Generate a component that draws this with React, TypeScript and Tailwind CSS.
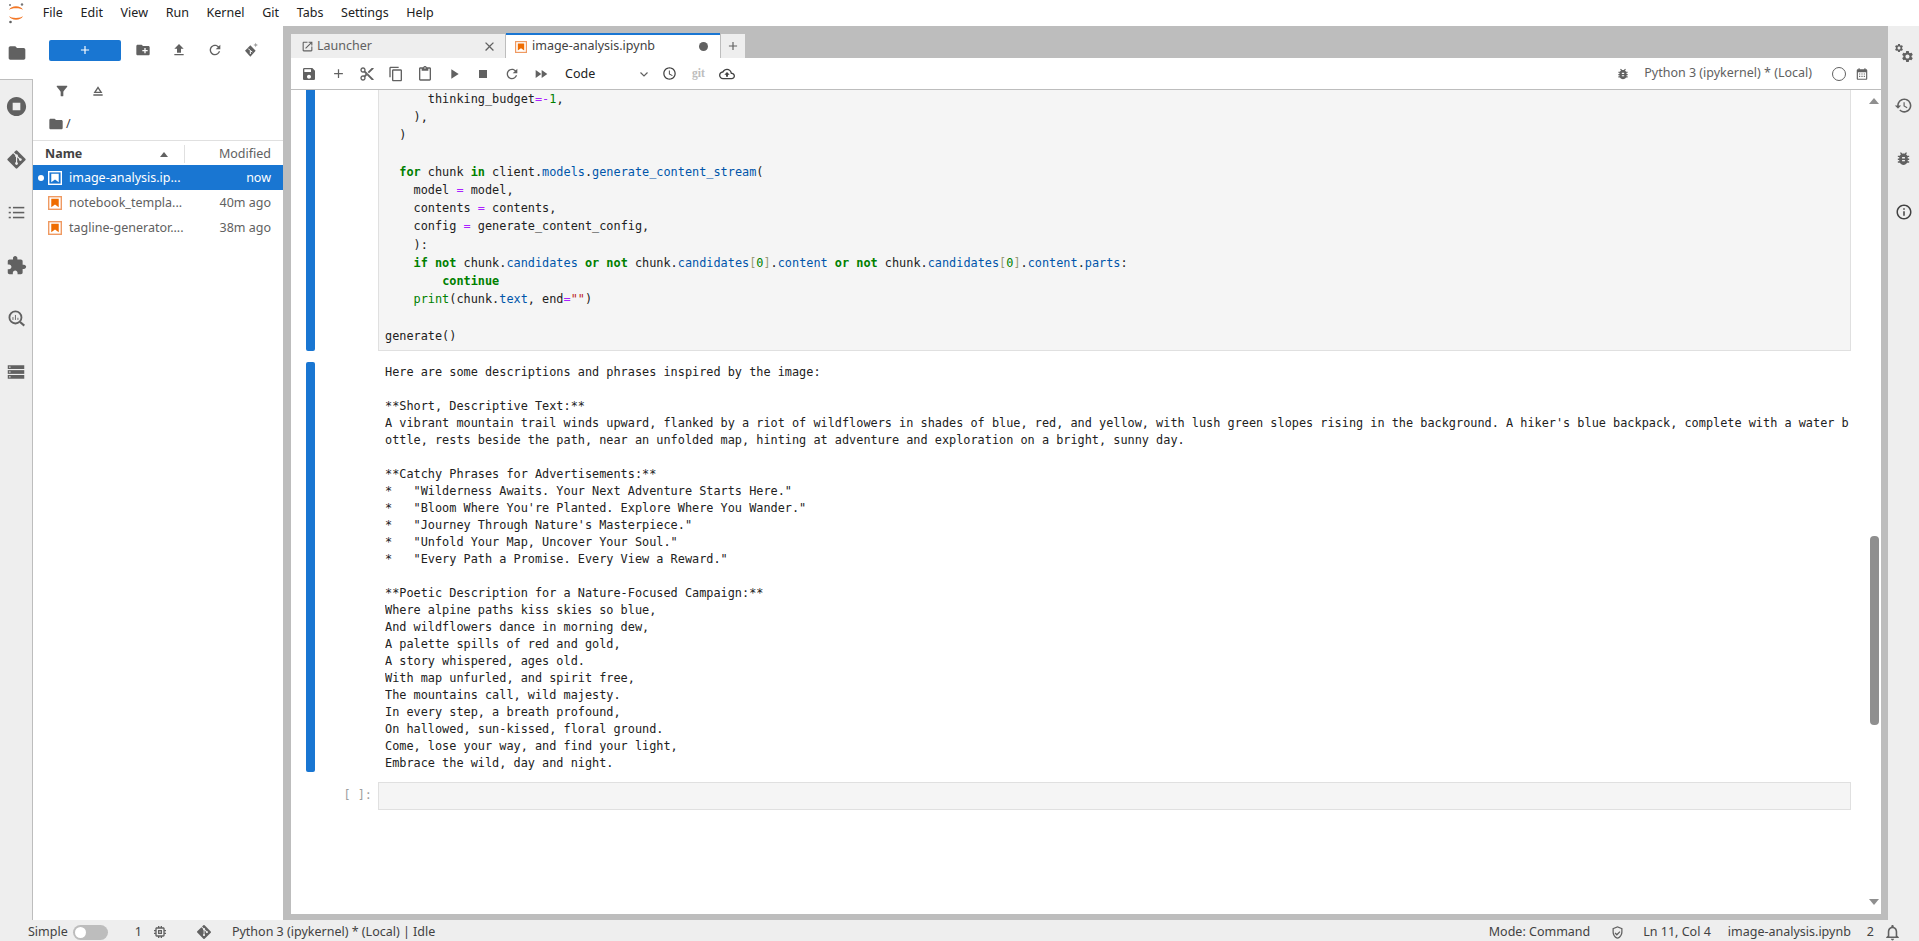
import { FaGitAlt } from "react-icons/fa";

const mono = { fontFamily: "'DejaVu Sans Mono', monospace" };

const paths: Record<string, string> = {
  folder: "M10 4H4c-1.1 0-1.99.9-1.99 2L2 18c0 1.1.9 2 2 2h16c1.1 0 2-.9 2-2V8c0-1.1-.9-2-2-2h-8l-2-2z",
  stopCircle: "M12 2C6.48 2 2 6.48 2 12s4.48 10 10 10 10-4.48 10-10S17.52 2 12 2zm4 14H8V8h8v8z",
  puzzle: "M20.5 11H19V7c0-1.1-.9-2-2-2h-4V3.5C13 2.12 11.88 1 10.5 1S8 2.12 8 3.5V5H4c-1.1 0-1.99.9-1.99 2v3.8H3.5c1.49 0 2.7 1.21 2.7 2.7s-1.21 2.7-2.7 2.7H2V20c0 1.1.9 2 2 2h3.8v-1.5c0-1.49 1.21-2.7 2.7-2.7 1.49 0 2.7 1.21 2.7 2.7V22H17c1.1 0 2-.9 2-2v-4h1.5c1.38 0 2.5-1.12 2.5-2.5S21.88 11 20.5 11z",
  save: "M17 3H5c-1.11 0-2 .9-2 2v14c0 1.1.89 2 2 2h14c1.1 0 2-.9 2-2V7l-4-4zm-5 16c-1.66 0-3-1.34-3-3s1.34-3 3-3 3 1.34 3 3-1.34 3-3 3zm3-10H5V5h10v4z",
  add: "M19 13h-6v6h-2v-6H5v-2h6V5h2v6h6v2z",
  cut: "M9.64 7.64c.23-.5.36-1.05.36-1.64 0-2.21-1.79-4-4-4S2 3.79 2 6s1.79 4 4 4c.59 0 1.14-.13 1.64-.36L10 12l-2.36 2.36C7.14 14.13 6.59 14 6 14c-2.21 0-4 1.79-4 4s1.79 4 4 4 4-1.79 4-4c0-.59-.13-1.14-.36-1.64L12 14l7 7h3v-1L9.64 7.64zM6 8c-1.1 0-2-.89-2-2s.9-2 2-2 2 .89 2 2-.9 2-2 2zm0 12c-1.1 0-2-.89-2-2s.9-2 2-2 2 .89 2 2-.9 2-2 2zm6-7.5c-.28 0-.5-.22-.5-.5s.22-.5.5-.5.5.22.5.5-.22.5-.5.5zM19 3l-6 6 2 2 7-7V3z",
  copy: "M16 1H4c-1.1 0-2 .9-2 2v14h2V3h12V1zm3 4H8c-1.1 0-2 .9-2 2v14c0 1.1.9 2 2 2h11c1.1 0 2-.9 2-2V7c0-1.1-.9-2-2-2zm0 16H8V7h11v14z",
  paste: "M19 2h-4.18C14.4.84 13.3 0 12 0c-1.3 0-2.4.84-2.82 2H5c-1.1 0-2 .9-2 2v16c0 1.1.9 2 2 2h14c1.1 0 2-.9 2-2V4c0-1.1-.9-2-2-2zm-7 0c.55 0 1 .45 1 1s-.45 1-1 1-1-.45-1-1 .45-1 1-1zm7 18H5V4h2v3h10V4h2v16z",
  play: "M8 5v14l11-7z",
  stop: "M6 6h12v12H6z",
  refresh: "M17.65 6.35C16.2 4.9 14.21 4 12 4c-4.42 0-7.99 3.58-7.99 8s3.57 8 7.99 8c3.73 0 6.84-2.55 7.73-6h-2.08c-.82 2.33-3.04 4-5.65 4-3.31 0-6-2.69-6-6s2.69-6 6-6c1.66 0 3.14.69 4.22 1.78L13 11h7V4l-2.35 2.35z",
  ff: "M4 18l8.5-6L4 6v12zm9-12v12l8.5-6L13 6z",
  clock: "M11.99 2C6.47 2 2 6.48 2 12s4.47 10 9.99 10C17.52 22 22 17.52 22 12S17.52 2 11.99 2zM12 20c-4.42 0-8-3.58-8-8s3.58-8 8-8 8 3.58 8 8-3.58 8-8 8zm.5-13H11v6l5.25 3.15.75-1.23-4.5-2.67V7z",
  cloud: "M19.35 10.04C18.67 6.59 15.64 4 12 4 9.11 4 6.6 5.64 5.35 8.04 2.34 8.36 0 10.91 0 14c0 3.31 2.69 6 6 6h13c2.76 0 5-2.24 5-5 0-2.64-2.05-4.78-4.65-4.96zM19 18H6c-2.21 0-4-1.79-4-4 0-2.05 1.53-3.76 3.56-3.97l1.07-.11.5-.95C8.08 7.14 9.94 6 12 6c2.62 0 4.88 1.86 5.39 4.43l.3 1.5 1.53.11c1.56.1 2.78 1.41 2.78 2.96 0 1.65-1.35 3-3 3zM8 13h2.55v3h2.9v-3H16l-4-4z",
  bug: "M20 8h-2.81c-.45-.78-1.07-1.45-1.82-1.96L17 4.41 15.59 3l-2.17 2.17C12.96 5.06 12.49 5 12 5c-.49 0-.96.06-1.41.17L8.41 3 7 4.41l1.62 1.63C7.88 6.55 7.26 7.22 6.81 8H4v2h2.09c-.05.33-.09.66-.09 1v1H4v2h2v1c0 .34.04.67.09 1H4v2h2.81c1.04 1.79 2.97 3 5.19 3s4.15-1.21 5.19-3H20v-2h-2.09c.05-.33.09-.66.09-1v-1h2v-2h-2v-1c0-.34-.04-.67-.09-1H20V8zm-6 8h-4v-2h4v2zm0-4h-4v-2h4v2z",
  history: "M13 3c-4.97 0-9 4.03-9 9H1l3.89 3.89.07.14L9 12H6c0-3.87 3.13-7 7-7s7 3.13 7 7-3.13 7-7 7c-1.93 0-3.68-.79-4.94-2.06l-1.42 1.42C8.27 19.99 10.51 21 13 21c4.97 0 9-4.03 9-9s-4.03-9-9-9zm-1 5v5l4.28 2.54.72-1.21-3.5-2.08V8H12z",
  info: "M11 7h2v2h-2zm0 4h2v6h-2zm1-9C6.48 2 2 6.48 2 12s4.48 10 10 10 10-4.48 10-10S17.52 2 12 2zm0 18c-4.41 0-8-3.59-8-8s3.59-8 8-8 8 3.59 8 8-3.59 8-8 8z",
  filter: "M4.25 5.61C6.27 8.2 10 13 10 13v6c0 .55.45 1 1 1h2c.55 0 1-.45 1-1v-6s3.72-4.8 5.74-7.39C20.25 4.95 19.78 4 18.95 4H5.04c-.83 0-1.3.95-.79 1.61z",
  upload: "M9 16h6v-6h4l-7-7-7 7h4v6zm-4 2h14v2H5z",
  newFolder: "M20 6h-8l-2-2H4c-1.11 0-1.99.89-1.99 2L2 18c0 1.11.89 2 2 2h16c1.11 0 2-.89 2-2V8c0-1.11-.89-2-2-2zm-1 8h-3v3h-2v-3h-3v-2h3V9h2v3h3v2z",
  eject: "M5 17h14v2H5zm7-12L5.33 15h13.34L12 5zm0 3.6L15 13H9l3-4.4z",
  launch: "M19 19H5V5h7V3H5c-1.11 0-2 .9-2 2v14c0 1.1.89 2 2 2h14c1.1 0 2-.9 2-2v-7h-2v7zM14 3v2h3.59l-9.83 9.83 1.41 1.41L19 6.41V10h2V3h-7z",
  close: "M19 6.41L17.59 5 12 10.59 6.41 5 5 6.41 10.59 12 5 17.59 6.41 19 12 13.41 17.59 19 19 17.59 13.41 12z",
  chip: "M15 9H9v6h6V9zm-2 4h-2v-2h2v2zm8-2V9h-2V7c0-1.1-.9-2-2-2h-2V3h-2v2h-2V3H9v2H7c-1.1 0-2 .9-2 2v2H3v2h2v2H3v2h2v2c0 1.1.9 2 2 2h2v2h2v-2h2v2h2v-2h2c1.1 0 2-.9 2-2v-2h2v-2h-2v-2h2zm-4 6H7V7h10v10z",
  shield: "M12 2L4 5v6.09c0 5.05 3.41 9.76 8 10.91 4.59-1.15 8-5.86 8-10.91V5l-8-3zm6 9.09c0 4-2.55 7.7-6 8.83-3.45-1.13-6-4.82-6-8.83V6.31l6-2.25 6 2.25v4.78zm-9.18.91L7.4 13.41 11 17l5.66-5.66-1.42-1.41L11 14.17 8.82 12z",
  bell: "M12 22c1.1 0 2-.9 2-2h-4c0 1.1.9 2 2 2zm6-6v-5c0-3.07-1.63-5.64-4.5-6.32V4c0-.83-.67-1.5-1.5-1.5s-1.5.67-1.5 1.5v.68C7.64 5.36 6 7.92 6 11v5l-2 2v1h16v-1l-2-2zm-2 1H8v-6c0-2.48 1.51-4.5 4-4.5s4 2.02 4 4.5v6z",
  calendar: "M19 4h-1V2h-2v2H8V2H6v2H5c-1.1 0-2 .9-2 2v14c0 1.1.9 2 2 2h14c1.1 0 2-.9 2-2V6c0-1.1-.9-2-2-2zm0 16H5V9h14v11zM7 11h2v2H7zm4 0h2v2h-2zm4 0h2v2h-2zm-8 4h2v2H7zm4 0h2v2h-2zm4 0h2v2h-2z",
  gear: "M19.14 12.94c.04-.3.06-.61.06-.94 0-.32-.02-.64-.07-.94l2.03-1.58c.18-.14.23-.41.12-.61l-1.92-3.32c-.12-.22-.37-.29-.59-.22l-2.39.96c-.5-.38-1.03-.7-1.62-.94l-.36-2.54c-.04-.24-.24-.41-.48-.41h-3.84c-.24 0-.43.17-.47.41l-.36 2.54c-.59.24-1.13.57-1.62.94l-2.39-.96c-.22-.08-.47 0-.59.22L2.74 8.87c-.12.21-.08.47.12.61l2.03 1.58c-.05.3-.09.63-.09.94s.02.64.07.94l-2.03 1.58c-.18.14-.23.41-.12.61l1.92 3.32c.12.22.37.29.59.22l2.39-.96c.5.38 1.03.7 1.62.94l.36 2.54c.05.24.24.41.48.41h3.84c.24 0 .44-.17.47-.41l.36-2.54c.59-.24 1.13-.56 1.62-.94l2.39.96c.22.08.47 0 .59-.22l1.92-3.32c.12-.22.07-.47-.12-.61l-2.01-1.58zM12 15.6c-1.98 0-3.6-1.62-3.6-3.6s1.62-3.6 3.6-3.6 3.6 1.62 3.6 3.6-1.62 3.6-3.6 3.6z",
};

const Icon = ({ name, size = 16, className = "text-[#616161]" }: { name: string; size?: number; className?: string }) => (
  <svg width={size} height={size} viewBox="0 0 24 24" fill="currentColor" className={`shrink-0 ${className}`}>
    <path d={paths[name]} />
  </svg>
);

const Gears = () => (
  <svg width="20" height="20" viewBox="0 0 24 24" fill="#616161">
    <g transform="translate(8 8) scale(0.68)"><path d={paths.gear} /></g>
    <g transform="translate(0 0) scale(0.5)"><path d={paths.gear} /></g>
  </svg>
);

const TocIcon = () => (
  <svg width="17" height="17" viewBox="0 0 24 24" fill="#616161">
    <rect x="1" y="4" width="3" height="2.2" /><rect x="7" y="4" width="16" height="2.2" />
    <rect x="1" y="11" width="3" height="2.2" /><rect x="7" y="11" width="16" height="2.2" />
    <rect x="1" y="18" width="3" height="2.2" /><rect x="7" y="18" width="16" height="2.2" />
  </svg>
);

const SearchBars = () => (
  <svg width="17" height="17" viewBox="0 0 24 24" fill="none" stroke="#616161">
    <circle cx="10.5" cy="10.5" r="8.5" strokeWidth="2.6" />
    <path d="M17 17l6 5" strokeWidth="3" />
    <path d="M7 10v4M10.5 7v7M14 11v3" strokeWidth="1.3" />
  </svg>
);

const DbIcon = () => (
  <svg width="18" height="18" viewBox="0 0 24 24">
    {[3, 9.5, 16].map((y) => (
      <g key={y}>
        <rect x="1" y={y} width="22" height="5" fill="#616161" />
        <rect x="3" y={y + 1.7} width="1.6" height="1.6" fill="#fff" />
      </g>
    ))}
  </svg>
);

const CloneIcon = () => (
  <svg width="16" height="16" viewBox="0 0 24 24">
    <path d="M11 5l8 8-8 9-8-9z" fill="#616161" />
    <path d="M8 10l3 3v5M11 13l3 2" stroke="#fff" strokeWidth="1.5" fill="none" />
    <path d="M19 1l1 2.5 2.5 1-2.5 1-1 2.5-1-2.5-2.5-1 2.5-1z" fill="#9e9e9e" />
  </svg>
);

const Logo = () => (
  <svg width="18" height="22" viewBox="0 0 18 22">
    <path d="M2 8C4 3 14 3 16 8C14 5.5 4 5.5 2 8z" fill="#f37726" />
    <path d="M2 14C4 19 14 19 16 14C14 16.5 4 16.5 2 14z" fill="#f37726" />
    <circle cx="15" cy="2.5" r="1.2" fill="#767677" />
    <circle cx="3" cy="3" r="1" fill="#767677" />
    <circle cx="3.5" cy="20" r="1.3" fill="#616262" />
  </svg>
);

const NotebookIcon = ({ light = false, size = 14 }: { light?: boolean; size?: number }) => (
  <svg width={size} height={size} viewBox="0 0 15 15" className="shrink-0">
    <rect x="0.75" y="0.75" width="13.5" height="13.5" fill="none" stroke={light ? "#fff" : "#ef9a62"} strokeWidth="1.5" />
    <path d="M3.5 3h8v9l-4-3-4 3z" fill={light ? "#fff" : "#ef6c00"} />
  </svg>
);

const menu = ["File", "Edit", "View", "Run", "Kernel", "Git", "Tabs", "Settings", "Help"];

const files = [
  { name: "image-analysis.ip...", time: "now", active: true },
  { name: "notebook_templa...", time: "40m ago", active: false },
  { name: "tagline-generator....", time: "38m ago", active: false },
];

const Kw = ({ children }: { children: string }) => <span className="font-bold text-[#008000]">{children}</span>;
const Prop = ({ children }: { children: string }) => <span className="text-[#0055aa]">{children}</span>;
const Op = ({ children }: { children: string }) => <span className="text-[#aa22ff]">{children}</span>;

const output = `Here are some descriptions and phrases inspired by the image:

**Short, Descriptive Text:**
A vibrant mountain trail winds upward, flanked by a riot of wildflowers in shades of blue, red, and yellow, with lush green slopes rising in the background. A hiker's blue backpack, complete with a water b
ottle, rests beside the path, near an unfolded map, hinting at adventure and exploration on a bright, sunny day.

**Catchy Phrases for Advertisements:**
*   "Wilderness Awaits. Your Next Adventure Starts Here."
*   "Bloom Where You're Planted. Explore Where You Wander."
*   "Journey Through Nature's Masterpiece."
*   "Unfold Your Map, Uncover Your Soul."
*   "Every Path a Promise. Every View a Reward."

**Poetic Description for a Nature-Focused Campaign:**
Where alpine paths kiss skies so blue,
And wildflowers dance in morning dew,
A palette spills of red and gold,
A story whispered, ages old.
With map unfurled, and spirit free,
The mountains call, wild majesty.
In every step, a breath profound,
On hallowed, sun-kissed, floral ground.
Come, lose your way, and find your light,
Embrace the wild, day and night.`;

export default function App() {
  return (
    <div className="flex h-[941px] w-full flex-col overflow-hidden bg-[#bdbdbd] text-[13px] text-[#424242]" style={{ fontFamily: "'Noto Sans', sans-serif" }}>
      {/* top menu */}
      <div className="flex h-[26px] items-center bg-white pl-[6px]">
        <div className="mr-[8px] flex w-[20px] justify-center"><Logo /></div>
        {menu.map((m) => (
          <span key={m} className="px-[8.85px] text-[12.5px] text-[#212121]">{m}</span>
        ))}
      </div>

      <div className="flex min-h-0 flex-1">
        {/* left rail */}
        <div className="flex w-[33px] shrink-0 flex-col bg-[#eeeeee]">
          <div className="flex h-[53px] items-center justify-center bg-white"><Icon name="folder" size={20} /></div>
          <div className="flex flex-1 flex-col items-center border-r border-t border-[#bdbdbd]">
            <div className="flex h-[53px] items-center justify-center"><Icon name="stopCircle" size={23} /></div>
            <div className="flex h-[53px] items-center justify-center"><FaGitAlt size={21} color="#616161" /></div>
            <div className="flex h-[53px] items-center justify-center"><TocIcon /></div>
            <div className="flex h-[53px] items-center justify-center"><Icon name="puzzle" size={21} /></div>
            <div className="flex h-[53px] items-center justify-center"><SearchBars /></div>
            <div className="flex h-[53px] items-center justify-center"><DbIcon /></div>
          </div>
        </div>

        {/* file browser */}
        <div className="flex w-[250px] shrink-0 flex-col bg-white">
          <div className="flex h-[48px] items-center pl-[16px]">
            <div className="flex h-[21px] w-[72px] items-center justify-center rounded-[2px] bg-[#1976d2]">
              <Icon name="add" size={14} className="text-white" />
            </div>
            <div className="ml-[14px] flex items-center gap-[20px]">
              <Icon name="newFolder" size={16} />
              <Icon name="upload" size={16} />
              <Icon name="refresh" size={16} />
              <CloneIcon />
            </div>
          </div>
          <div className="flex h-[34px] items-center gap-[20px] pl-[21px]">
            <Icon name="filter" size={16} />
            <Icon name="eject" size={16} />
          </div>
          <div className="flex h-[32px] items-center gap-[2px] pl-[15px]">
            <Icon name="folder" size={16} />
            <span className="text-[12.5px]">/</span>
          </div>
          <div className="flex h-[25px] items-center border-t border-[#e0e0e0] pl-[12px] pr-[12px] pt-[2px]">
            <span className="w-[115px] text-[12.5px] font-bold text-[#424242]">Name</span>
            <span className="h-0 w-0 border-x-[4px] border-b-[5px] border-x-transparent border-b-[#616161]" />
            <span className="ml-[16px] h-[18px] w-px bg-[#e0e0e0]" />
            <span className="flex-1 text-right text-[12.5px] text-[#616161]">Modified</span>
          </div>
          {files.map((f) => (
            <div key={f.name} className={`flex h-[25px] items-center pr-[12px] ${f.active ? "bg-[#1976d2] text-white" : "text-[#616161]"}`}>
              <span className="flex w-[11px] justify-end">
                {f.active && <span className="h-[6px] w-[6px] rounded-full bg-white" />}
              </span>
              <span className="ml-[4px]"><NotebookIcon light={f.active} /></span>
              <span className="ml-[7px] flex-1 pt-px text-[12.5px]">{f.name}</span>
              <span className="pt-px text-[12.5px]">{f.time}</span>
            </div>
          ))}
        </div>

        {/* main area */}
        <div className="ml-[8px] flex min-w-0 flex-1 flex-col pb-[6px]">
          <div className="flex h-[32px] shrink-0 items-end pt-[7px]">
            <div className="flex h-[24px] w-[214px] items-center bg-[#eeeeee] pl-[10px] pr-[8px]">
              <Icon name="launch" size={13} />
              <span className="ml-[3px] flex-1 text-[12.5px] text-[#616161]">Launcher</span>
              <Icon name="close" size={15} />
            </div>
            <div className="ml-px flex h-[25px] w-[214px] items-center border-t-2 border-[#1976d2] bg-white pl-[9px] pr-[12px]">
              <NotebookIcon size={12} />
              <span className="ml-[5px] flex-1 text-[12.5px] text-[#424242]">image-analysis.ipynb</span>
              <span className="h-[9px] w-[9px] rounded-full bg-[#616161]" />
            </div>
            <div className="ml-px flex h-[24px] w-[24px] items-center justify-center bg-[#eeeeee]">
              <Icon name="add" size={14} />
            </div>
          </div>

          <div className="flex min-h-0 flex-1 flex-col bg-white">
            {/* notebook toolbar */}
            <div className="flex h-[32px] shrink-0 items-center border-b border-[#bdbdbd] pl-[10px] pr-[12px]">
              <Icon name="save" size={16} />
              <span className="ml-[14px]"><Icon name="add" size={15} /></span>
              <span className="ml-[13px]"><Icon name="cut" size={16} /></span>
              <span className="ml-[13px]"><Icon name="copy" size={16} /></span>
              <span className="ml-[13px]"><Icon name="paste" size={16} /></span>
              <span className="ml-[13px]"><Icon name="play" size={16} /></span>
              <span className="ml-[13px]"><Icon name="stop" size={16} /></span>
              <span className="ml-[13px]"><Icon name="refresh" size={16} /></span>
              <span className="ml-[13px]"><Icon name="ff" size={16} /></span>
              <span className="ml-[16px] w-[74px] pt-[2px] text-[12.5px] text-[#212121]">Code</span>
              <svg width="10" height="10" viewBox="0 0 10 10" fill="none" stroke="#616161" strokeWidth="1.2"><path d="M1.5 3.5L5 7l3.5-3.5" /></svg>
              <span className="ml-[13px]"><Icon name="clock" size={15} className="text-[#424242]" /></span>
              <span className="ml-[15px] text-[11.5px] font-bold text-[#bdbdbd]" style={{ fontFamily: "'Liberation Serif', serif" }}>git</span>
              <span className="ml-[14px]"><Icon name="cloud" size={16} className="text-[#424242]" /></span>
              <span className="flex-1" />
              <Icon name="bug" size={14} />
              <span className="ml-[14px] text-[12.5px] text-[#616161]">Python 3 (ipykernel) * (Local)</span>
              <span className="ml-[20px] h-[14px] w-[14px] rounded-full border border-[#616161]" />
              <span className="ml-[9px]"><Icon name="calendar" size={14} /></span>
            </div>

            {/* notebook */}
            <div className="flex min-h-0 flex-1 overflow-hidden text-[#212121]" style={mono}>
              <div className="min-w-0 flex-1 pl-[15px]">
                <div className="flex">
                  <div className="w-[9px] shrink-0 rounded-b-[2px] bg-[#1976d2]" />
                  <pre
                    className="ml-[63px] min-w-0 flex-1 border-x border-b border-[#e0e0e0] bg-[#f5f5f5] pb-[5px] pl-[6px] text-[11.86px] leading-[18.2px]"
                    style={mono}
                  >
                    <div>      thinking_budget<Op>=-</Op><span className="text-[#008000]">1</span>,</div>
                    <div>    ),</div>
                    <div>  )</div>
                    <div>{"\u00a0"}</div>
                    <div>  <Kw>for</Kw> chunk <Kw>in</Kw> client.<Prop>models</Prop>.<Prop>generate_content_stream</Prop>(</div>
                    <div>    model <Op>=</Op> model,</div>
                    <div>    contents <Op>=</Op> contents,</div>
                    <div>    config <Op>=</Op> generate_content_config,</div>
                    <div>    ):</div>
                    <div>    <Kw>if</Kw> <Kw>not</Kw> chunk.<Prop>candidates</Prop> <Kw>or</Kw> <Kw>not</Kw> chunk.<Prop>candidates</Prop><span className="text-[#999977]">[</span><span className="text-[#008000]">0</span><span className="text-[#999977]">]</span>.<Prop>content</Prop> <Kw>or</Kw> <Kw>not</Kw> chunk.<Prop>candidates</Prop><span className="text-[#999977]">[</span><span className="text-[#008000]">0</span><span className="text-[#999977]">]</span>.<Prop>content</Prop>.<Prop>parts</Prop>:</div>
                    <div>        <Kw>continue</Kw></div>
                    <div>    <span className="text-[#008000]">print</span>(chunk.<Prop>text</Prop>, end<Op>=</Op><span className="text-[#ba2121]">""</span>)</div>
                    <div>{"\u00a0"}</div>
                    <div>generate()</div>
                  </pre>
                </div>

                <div className="mt-[11px] flex">
                  <div className="w-[9px] shrink-0 rounded-[2px] bg-[#1976d2]" />
                  <pre className="ml-[70px] min-w-0 flex-1 overflow-hidden pt-[2px] text-[11.86px] leading-[17px]" style={mono}>{output}</pre>
                </div>

                <div className="mt-[10px] flex">
                  <div className="flex w-[72px] shrink-0 items-center justify-end pr-[6px] text-[11.86px] text-[#9e9e9e]">[ ]:</div>
                  <div className="h-[28px] min-w-0 flex-1 border border-[#e0e0e0] bg-[#f5f5f5]" />
                </div>
              </div>

              {/* scrollbar */}
              <div className="flex w-[30px] shrink-0 flex-col items-center pl-[18px] pr-[2px]">
                <span className="mt-[8px] h-0 w-0 border-x-[5px] border-b-[6px] border-x-transparent border-b-[#8f8f8f]" />
                <div className="mt-[432px] h-[189px] w-[9px] shrink-0 rounded-[4px] bg-[#8f8f8f]" />
                <span className="mt-[174px] h-0 w-0 border-x-[5px] border-t-[6px] border-x-transparent border-t-[#8f8f8f]" />
              </div>
            </div>
          </div>
        </div>

        {/* right rail */}
        <div className="ml-[7px] flex w-[31px] shrink-0 flex-col items-center bg-[#eeeeee]">
          <div className="flex h-[53px] w-full items-center justify-center"><Gears /></div>
          <div className="flex h-[53px] items-center justify-center"><Icon name="history" size={19} /></div>
          <div className="flex h-[53px] items-center justify-center"><Icon name="bug" size={17} /></div>
          <div className="flex h-[53px] items-center justify-center"><Icon name="info" size={18} className="text-[#424242]" /></div>
        </div>
      </div>

      {/* status bar */}
      <div className="flex h-[21px] shrink-0 items-center bg-[#eeeeee] pl-[28px] pt-[3px] text-[12.5px] text-[#424242]">
        <span>Simple</span>
        <span className="ml-[5px] flex h-[15px] w-[35px] items-center rounded-full bg-[#bdbdbd] pl-[2px]">
          <span className="h-[11px] w-[11px] rounded-full bg-white" />
        </span>
        <span className="ml-[27px]">1</span>
        <span className="ml-[10px]"><Icon name="chip" size={16} /></span>
        <span className="ml-[28px]"><FaGitAlt size={16} color="#616161" /></span>
        <span className="ml-[20px]">Python 3 (ipykernel) * (Local) | Idle</span>
        <span className="flex-1" />
        <span>Mode: Command</span>
        <span className="ml-[20px]"><Icon name="shield" size={15} /></span>
        <span className="ml-[18px]">Ln 11, Col 4</span>
        <span className="ml-[17px]">image-analysis.ipynb</span>
        <span className="ml-[16px]">2</span>
        <span className="ml-[9px] mr-[17px]"><Icon name="bell" size={19} /></span>
      </div>
    </div>
  );
}
